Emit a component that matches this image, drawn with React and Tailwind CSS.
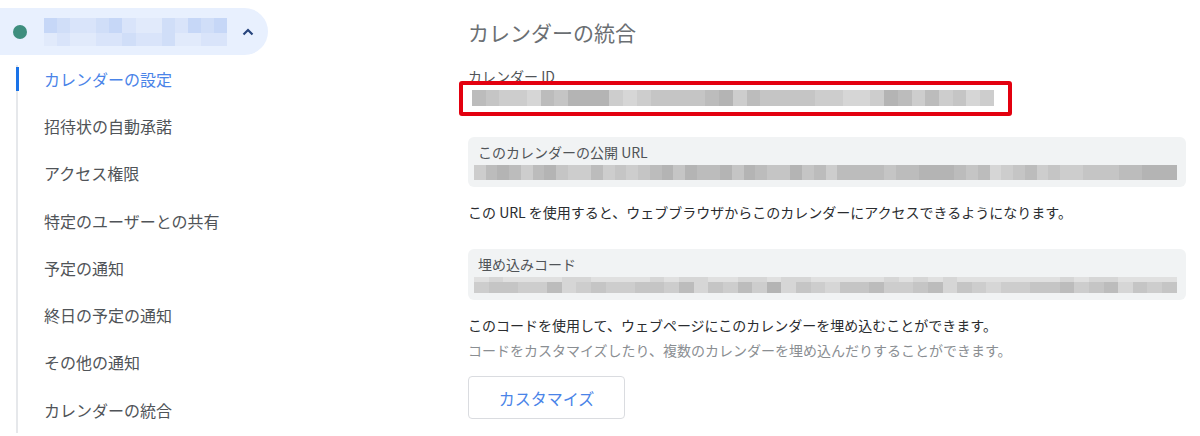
import React from 'react';

const GRAYS = [
    'bg-[#b4b4b4]',
    'bg-[#bcbcbc]',
    'bg-[#c5c5c5]',
    'bg-[#cdcdcd]',
    'bg-[#d6d6d6]',
    'bg-[#e0e0e0]',
];

const BLUES = [
    'bg-[#c6d7f7]',
    'bg-[#d0def8]',
    'bg-[#d9e4fa]',
    'bg-[#e1eafb]',
];

const BlurBar = ({ pattern, shades = GRAYS, className = '' }) => (
    <div className={`flex ${className}`}>
        {pattern.split('').map((d, i) => (
            <div key={i} className={`flex-1 ${shades[Number(d)]}`} />
        ))}
    </div>
);

const navItems = [
    'カレンダーの設定',
    '招待状の自動承諾',
    'アクセス権限',
    '特定のユーザーとの共有',
    '予定の通知',
    '終日の予定の通知',
    'その他の通知',
    'カレンダーの統合',
];

const Sidebar = () => (
    <aside className="w-[268px] shrink-0 pt-2">
        <div className="flex h-[47px] items-center rounded-r-full bg-[#e8f0fe] pl-[13px]">
            <span className="h-[14px] w-[14px] rounded-full bg-[#3e8e7e]" />
            <div className="ml-[17px] flex w-[183px] flex-col">
                <BlurBar pattern="01221023312010" shades={BLUES} className="h-[15px]" />
                <BlurBar pattern="32332212213322" shades={BLUES} className="h-[13px]" />
            </div>
            <svg className="ml-auto mr-[14px]" width="12" height="8" viewBox="0 0 12 8" fill="none">
                <path d="M1.5 6.5 L6 2 L10.5 6.5" stroke="#28457d" strokeWidth="2.2" />
            </svg>
        </div>
        <nav className="relative ml-4">
            <span className="absolute left-0 top-[10px] bottom-0 w-[2px] bg-[#e6e8eb]" />
            {navItems.map((label, i) => (
                <div
                    key={label}
                    className={`relative flex h-[47.3px] items-center pl-[28px] text-[16px] ${
                        i === 0 ? 'text-[#4a84e8]' : 'text-[#505458]'
                    }`}
                >
                    {i === 0 && (
                        <span className="absolute left-0 top-[12px] h-[24px] w-[3px] bg-[#1a73e8]" />
                    )}
                    {label}
                </div>
            ))}
        </nav>
    </aside>
);

const FieldBox = ({ label, children }) => (
    <div className="w-[718px] rounded-md bg-[#f1f3f4] pb-[7px] pt-[5px]">
        <div className="pl-[10px] text-[14px] leading-[20px] text-[#505458]">{label}</div>
        <div className="mt-[3px] pl-[6px] pr-[9px]">{children}</div>
    </div>
);

export default function App() {
    return (
        <div className="flex min-h-[436px] bg-white font-['Noto_Sans_CJK_JP','Noto_Sans',sans-serif] leading-[20px]">
            <Sidebar />
            <main className="pl-[200px] pt-[18px]">
                <h1 className="text-[21px] leading-[28px] text-[#6b6f73]">カレンダーの統合</h1>

                <div className="mt-[20px] text-[14px] leading-[20px] text-[#505458]">カレンダー ID</div>
                <div className="relative mt-[4px] w-[526px] pl-[4px]">
                    <BlurBar
                        pattern="12334120003432222103122223344301313243"
                        className="h-[16px]"
                    />
                    <div className="absolute left-[-9px] top-[-9px] h-[35px] w-[553px] rounded-[3px] border-4 border-[#e3000f]" />
                </div>

                <div className="mt-[31px]">
                    <FieldBox label="このカレンダーの公開 URL">
                        <BlurBar
                            pattern="310131023313232102011020122021311112110001214321323322211000"
                            className="h-[15px]"
                        />
                    </FieldBox>
                </div>

                <p className="mt-[15px] text-[14px] text-[#2a2c2f]">
                    この URL を使用すると、ウェブブラウザからこのカレンダーにアクセスできるようになります。
                </p>

                <div className="mt-[27px]">
                    <FieldBox label="埋め込みコード">
                        <div className="flex flex-col">
                            <BlurBar
                                pattern="545555445555454455445445555545454555555545445555"
                                className="h-[5px]"
                            />
                            <BlurBar
                                pattern="322331432332231423130423422133214234332213214232"
                                className="h-[11px]"
                            />
                        </div>
                    </FieldBox>
                </div>

                <p className="mt-[15px] text-[14px] text-[#2a2c2f]">
                    このコードを使用して、ウェブページにこのカレンダーを埋め込むことができます。
                </p>
                <p className="mt-[5px] text-[14px] text-[#8a8e92]">
                    コードをカスタマイズしたり、複数のカレンダーを埋め込んだりすることができます。
                </p>

                <button className="mt-[16px] flex h-[43px] w-[157px] items-center justify-center rounded-[4px] border border-[#dadce0] bg-white text-[16px] text-[#4a84e8]">
                    カスタマイズ
                </button>
            </main>
        </div>
    );
}
